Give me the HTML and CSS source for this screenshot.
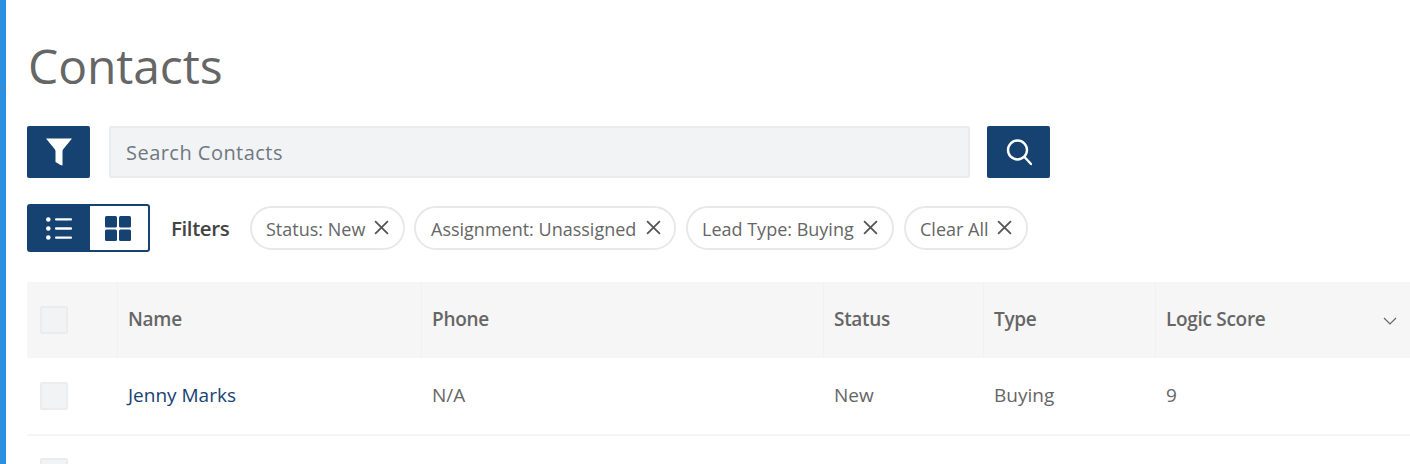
FILE: index.html
```html
<!DOCTYPE html>
<html lang="en">
<head>
    <meta charset="UTF-8">
    <title>Contacts</title>
    <link rel="stylesheet" href="styles.css">
</head>
<body>
    <div class="sidebar"><div class="sidebar-top"></div></div>
    <div class="container">
        <h1>Contacts</h1>

        <div class="search-row">
            <button class="icon-btn">
                <svg width="26" height="28" viewBox="0 0 26 28"><path d="M0 0.5H26L17 11.5L16.5 13V27.5L14.5 27L9.5 24V13L9 11.5Z" fill="#fff"/></svg>
            </button>
            <input class="search-input" type="text" placeholder="Search Contacts">
            <button class="icon-btn">
                <svg width="26" height="28" viewBox="0 0 26 28" fill="none" stroke="#fff" stroke-width="2.4" stroke-linecap="round"><circle cx="11.5" cy="12" r="9.5"/><path d="M18.5 19L25 26"/></svg>
            </button>
        </div>

        <div class="filter-row">
            <div class="view-toggle">
                <div class="view-btn active">
                    <svg width="26" height="23" viewBox="0 0 26 23" fill="#fff"><circle cx="2.3" cy="2.5" r="2.3"/><circle cx="2.3" cy="11.5" r="2.3"/><circle cx="2.3" cy="20.5" r="2.3"/><rect x="9" y="1.2" width="17" height="2.4" rx="1"/><rect x="9" y="10.3" width="17" height="2.4" rx="1"/><rect x="9" y="19.4" width="17" height="2.4" rx="1"/></svg>
                </div>
                <div class="view-btn">
                    <svg width="26" height="25" viewBox="0 0 26 25" fill="#164272"><rect width="12" height="11.5" rx="1.5"/><rect x="14" width="12" height="11.5" rx="1.5"/><rect y="13.5" width="12" height="11.5" rx="1.5"/><rect x="14" y="13.5" width="12" height="11.5" rx="1.5"/></svg>
                </div>
            </div>
            <span class="filters-label">Filters</span>
            <div class="chips">
                <span class="chip chip-status">Status: New <svg class="chip-x" viewBox="0 0 14 14"><path d="M1 1L13 13M13 1L1 13"/></svg></span>
                <span class="chip chip-assign">Assignment: Unassigned <svg class="chip-x" viewBox="0 0 14 14"><path d="M1 1L13 13M13 1L1 13"/></svg></span>
                <span class="chip chip-lead">Lead Type: Buying <svg class="chip-x" viewBox="0 0 14 14"><path d="M1 1L13 13M13 1L1 13"/></svg></span>
                <span class="chip chip-clear">Clear All <svg class="chip-x" viewBox="0 0 14 14"><path d="M1 1L13 13M13 1L1 13"/></svg></span>
            </div>
        </div>

        <div class="table">
            <div class="tr th">
                <div class="td col-check"><span class="checkbox"></span></div>
                <div class="td col-name">Name</div>
                <div class="td col-phone">Phone</div>
                <div class="td col-status">Status</div>
                <div class="td col-type">Type</div>
                <div class="td col-score">Logic Score
                    <svg class="chevron" width="14" height="8" viewBox="0 0 14 8" fill="none" stroke="#666" stroke-width="1.2"><path d="M1 1L7 7L13 1"/></svg>
                </div>
            </div>
            <div class="tr row">
                <div class="td col-check"><span class="checkbox"></span></div>
                <div class="td col-name"><a class="contact-link" href="#">Jenny Marks</a></div>
                <div class="td col-phone">N/A</div>
                <div class="td col-status">New</div>
                <div class="td col-type">Buying</div>
                <div class="td col-score">9</div>
            </div>
            <div class="tr row">
                <div class="td col-check"><span class="checkbox"></span></div>
            </div>
        </div>
    </div>
</body>
</html>
```

FILE: styles.css
```css
html, body {
    height: 100%;
    overflow: hidden;
}
body {
    font-family: 'Open Sans', sans-serif;
    margin: 0;
    color: #666;
    background-color: white;
    display: flex;
}
.sidebar {
    width: 6px;
    flex-shrink: 0;
    background-color: #2b90e2;
}
.sidebar-top {
    height: 88px;
    border-bottom: 1px solid #4f86bd;
}
.container {
    flex: 1;
    min-width: 0;
    padding: 0 0 0 21px;
}
h1 {
    font-size: 48px;
    font-weight: 400;
    line-height: 66px;
    letter-spacing: -0.1px;
    color: #666;
    margin: 33px 0 27px 1px;
}
.search-row {
    display: flex;
    height: 52px;
}
.icon-btn {
    width: 63px;
    height: 52px;
    padding: 0;
    border: none;
    border-radius: 2px;
    background-color: #164272;
    display: flex;
    align-items: center;
    justify-content: center;
}
.search-input {
    width: 861px;
    height: 52px;
    margin: 0 17px 0 19px;
    padding: 0 15px;
    box-sizing: border-box;
    border: 2px solid #e9ebed;
    border-radius: 2px;
    background-color: #f2f3f5;
    font-family: inherit;
    font-size: 20px;
    letter-spacing: 0.47px;
}
.search-input::placeholder {
    color: #6f7880;
    opacity: 1;
}
.filter-row {
    display: flex;
    align-items: center;
    margin-top: 26px;
    height: 48px;
}
.view-toggle {
    display: flex;
    width: 123px;
    height: 48px;
    box-sizing: border-box;
    border: 2px solid #164272;
    border-radius: 3px;
}
.view-btn {
    flex: 1;
    display: flex;
    align-items: center;
    justify-content: center;
    padding-right: 2px;
}
.view-btn.active {
    flex: 0 0 61px;
    box-sizing: border-box;
    background-color: #164272;
}
.filters-label {
    font-size: 20.5px;
    font-weight: 600;
    color: #444;
    letter-spacing: -0.4px;
    margin-left: 21px;
    width: 79px;
}
.chips {
    display: flex;
    gap: 9px;
}
.chip {
    display: flex;
    align-items: center;
    justify-content: space-between;
    height: 44px;
    box-sizing: border-box;
    padding: 1px 14px 0 14px;
    border: 2px solid #e8e8e8;
    border-radius: 22px;
    font-size: 18px;
    color: #666;
    white-space: nowrap;
}
.chip-status { width: 155px; }
.chip-assign { width: 262px; padding-left: 15px; padding-right: 13px; }
.chip-lead { width: 208px; margin-left: 1px; }
.chip-clear { width: 124px; margin-left: 1px; }
.chip-x {
    width: 15px;
    height: 15px;
    margin-top: -2px;
    fill: none;
    stroke: #555;
    stroke-width: 1.7;
}
.table {
    margin-top: 30px;
}
.tr {
    display: flex;
    height: 76px;
    box-sizing: border-box;
    font-size: 19px;
}
.row + .row {
    box-shadow: inset 0 2px 0 #f5f5f5;
}
.th {
    background-color: #f6f6f6;
    font-size: 19px;
    font-weight: 600;
    letter-spacing: -0.3px;
}
.td {
    display: flex;
    align-items: center;
    box-sizing: border-box;
    padding-left: 11px;
    padding-bottom: 2px;
    white-space: nowrap;
}
.th .td {
    padding-left: 10px;
    padding-bottom: 3px;
}
.th .td + .td {
    border-left: 1px solid #f1f1f1;
}
.col-check { width: 90px; }
.th .col-check, .row .col-check { padding: 0 0 0 13px; }
.col-name { width: 304px; }
.col-phone { width: 402px; }
.col-status { width: 160px; }
.col-type { width: 172px; }
.col-score {
    flex: 1;
    justify-content: space-between;
    padding-right: 13px;
}
.checkbox {
    display: block;
    width: 28px;
    height: 28px;
    box-sizing: border-box;
    border: 2px solid #ebecee;
    border-radius: 2px;
    background-color: #f2f3f5;
}
.contact-link {
    color: #164272;
    text-decoration: none;
}
.chevron {
    margin-top: 5px;
}
```
